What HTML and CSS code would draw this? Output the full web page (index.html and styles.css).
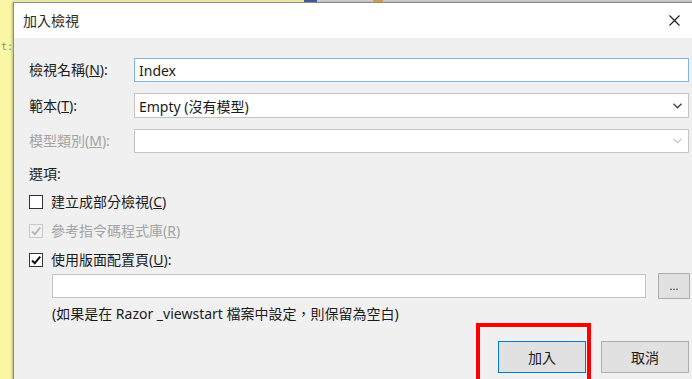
FILE: index.html
```html
<!DOCTYPE html>
<html lang="zh-Hant">

<head>
    <meta charset="UTF-8">
    <meta name="viewport" content="width=device-width, initial-scale=1.0">
    <title>加入檢視</title>
    <link rel="stylesheet" href="styles.css">
</head>

<body>
    <div class="desk">
        <div class="gutter">
            <span class="code">t:</span>
        </div>
        <div class="stage">
            <!-- editor tab strip peeking above the dialog -->
            <div class="strip">
                <span class="strip-yellow"></span>
                <span class="strip-blue"></span>
                <span class="strip-orange"></span>
            </div>

            <div class="dialog">
                <div class="titlebar">
                    <span class="title">加入檢視</span>
                    <svg class="close" width="11" height="11" viewBox="0 0 11 11">
                        <path d="M0.5 0.5 L10.5 10.5 M10.5 0.5 L0.5 10.5" stroke="#1a1a1a" stroke-width="1.1" fill="none" />
                    </svg>
                </div>

                <div class="dialog-body">
                    <div class="form-grid">
                        <label class="lbl" for="viewName">檢視名稱(<u>N</u>):</label>
                        <input class="field focused" id="viewName" type="text" value="Index">

                        <label class="lbl row2">範本(<u>T</u>):</label>
                        <div class="field select row2">
                            <span>Empty (沒有模型)</span>
                            <svg width="9" height="6" viewBox="0 0 9 6"><path d="M0.5 0.8 L4.5 4.8 L8.5 0.8" stroke="#444" stroke-width="1.4" fill="none" /></svg>
                        </div>

                        <label class="lbl disabled row3">模型類別(<u>M</u>):</label>
                        <div class="field select row3">
                            <span></span>
                            <svg width="9" height="6" viewBox="0 0 9 6"><path d="M0.5 0.8 L4.5 4.8 L8.5 0.8" stroke="#bcbcbc" stroke-width="1.1" fill="none" /></svg>
                        </div>
                    </div>

                    <div class="options-title">選項:</div>

                    <div class="check-row first">
                        <span class="box"></span>
                        <span>建立成部分檢視(<u>C</u>)</span>
                    </div>
                    <div class="check-row disabled">
                        <span class="box off">
                            <svg width="12" height="12" viewBox="0 0 12 12"><path d="M2 6.5 L4.8 9.2 L10.2 2.6" stroke="#b4b4b4" stroke-width="1.8" fill="none" /></svg>
                        </span>
                        <span>參考指令碼程式庫(<u>R</u>)</span>
                    </div>
                    <div class="check-row">
                        <span class="box">
                            <svg width="12" height="12" viewBox="0 0 12 12"><path d="M2 6.5 L4.8 9.2 L10.2 2.6" stroke="#111" stroke-width="2" fill="none" /></svg>
                        </span>
                        <span>使用版面配置頁(<u>U</u>):</span>
                    </div>

                    <div class="layout-row">
                        <input class="field path" type="text">
                        <button class="btn browse">...</button>
                    </div>
                    <div class="note">(如果是在 Razor _viewstart 檔案中設定，則保留為空白)</div>

                    <div class="footer">
                        <div class="highlight"></div>
                        <button class="btn default">加入</button>
                        <button class="btn">取消</button>
                    </div>
                </div>
            </div>
        </div>
    </div>
</body>

</html>
```

FILE: styles.css
```css
body {
    margin: 0;
    font-family: "Noto Sans", "Noto Sans CJK TC", sans-serif;
    font-size: 14px;
    color: #1b1b1b;
    background-color: #f9f6a4;
}

.desk {
    display: flex;
    width: 692px;
    height: 379px;
    overflow: hidden;
}

/* yellow code editor behind the dialog */
.gutter {
    width: 13px;
    flex-shrink: 0;
    overflow: hidden;
    background-color: #f9f6a4;
}

.code {
    display: block;
    margin-top: 40px;
    padding-left: 1px;
    font-family: "DejaVu Sans Mono", monospace;
    font-size: 10px;
    line-height: 14px;
    color: #6f9c9c;
    white-space: nowrap;
}

.stage {
    flex: 1;
    min-width: 0;
}

.strip {
    display: flex;
    height: 2px;
    background-color: #cfcfcf;
}

.strip-yellow {
    width: 291px;
    background-color: #e9e6a0;
}

.strip-blue {
    width: 13px;
    background-color: #3d5a9c;
}

.strip-orange {
    width: 10px;
    margin-left: 56px;
    background-color: #d49a4e;
}

/* dialog window */
.dialog {
    width: 700px;
    height: 400px;
    border-top: 1px solid #8c8c8c;
    border-left: 1px solid #8c8c8c;
    background-color: #f0f0f0;
    box-shadow: -1px 0 2px rgba(0, 0, 0, 0.25);
}

.titlebar {
    display: flex;
    align-items: center;
    height: 35px;
    padding-left: 9px;
    background-color: #fff;
}

.title {
    flex: 1;
    color: #2a2a2a;
    line-height: 20px;
}

.close {
    margin-right: 34px;
}

.dialog-body {
    padding: 20px 0 0 15px;
}

.form-grid {
    display: grid;
    grid-template-columns: 105px 555px;
    grid-template-rows: 24px 25px 24px;
    row-gap: 11px;
    align-items: center;
}

.lbl {
    line-height: 20px;
    white-space: nowrap;
}

.disabled {
    color: #a3a3a3;
}

.field {
    box-sizing: border-box;
    height: 100%;
    margin: 0;
    border: 1px solid #c4c4c4;
    background-color: #fff;
    font-family: inherit;
    font-size: 14px;
    color: #1b1b1b;
}

.focused {
    width: 555px;
    padding: 0 4px;
    border-color: #7eb4ea;
    outline: none;
}

.select {
    display: flex;
    align-items: center;
    justify-content: space-between;
    padding: 0 6px 0 4px;
}

.options-title {
    margin-top: 11px;
    line-height: 20px;
}

.check-row {
    display: flex;
    align-items: center;
    gap: 8px;
    height: 20px;
    margin-top: 8px;
    line-height: 20px;
}

.check-row + .check-row {
    margin-top: 9px;
}

.box {
    display: flex;
    align-items: center;
    justify-content: center;
    box-sizing: border-box;
    width: 14px;
    height: 14px;
    border: 1px solid #333;
    background-color: #fff;
}

.box.off {
    border-color: #cacaca;
    background-color: #f0f0f0;
}

.layout-row {
    display: flex;
    align-items: center;
    gap: 12px;
    margin: 3px 0 0 23px;
}

.path {
    width: 594px;
    height: 24px;
}

.btn {
    box-sizing: border-box;
    margin: 0;
    border: 1px solid #adadad;
    background-color: #e1e1e1;
    font-family: inherit;
    font-size: 14px;
    color: #1b1b1b;
}

.browse {
    width: 32px;
    height: 26px;
    padding: 0;
    font-size: 11px;
    line-height: 18px;
}

.note {
    margin: 5px 0 0 23px;
    line-height: 20px;
}

.footer {
    position: relative;
    display: flex;
    gap: 15px;
    width: 660px;
    margin-top: 17px;
    justify-content: flex-end;
}

.footer .btn {
    width: 88px;
    height: 32px;
    padding: 0;
}

.footer .default {
    border-color: #0078d7;
}

/* red annotation box drawn over the screenshot */
.highlight {
    position: absolute;
    left: 447px;
    top: -18px;
    width: 115px;
    height: 70px;
    box-sizing: border-box;
    border: 4px solid #f00;
}
```
